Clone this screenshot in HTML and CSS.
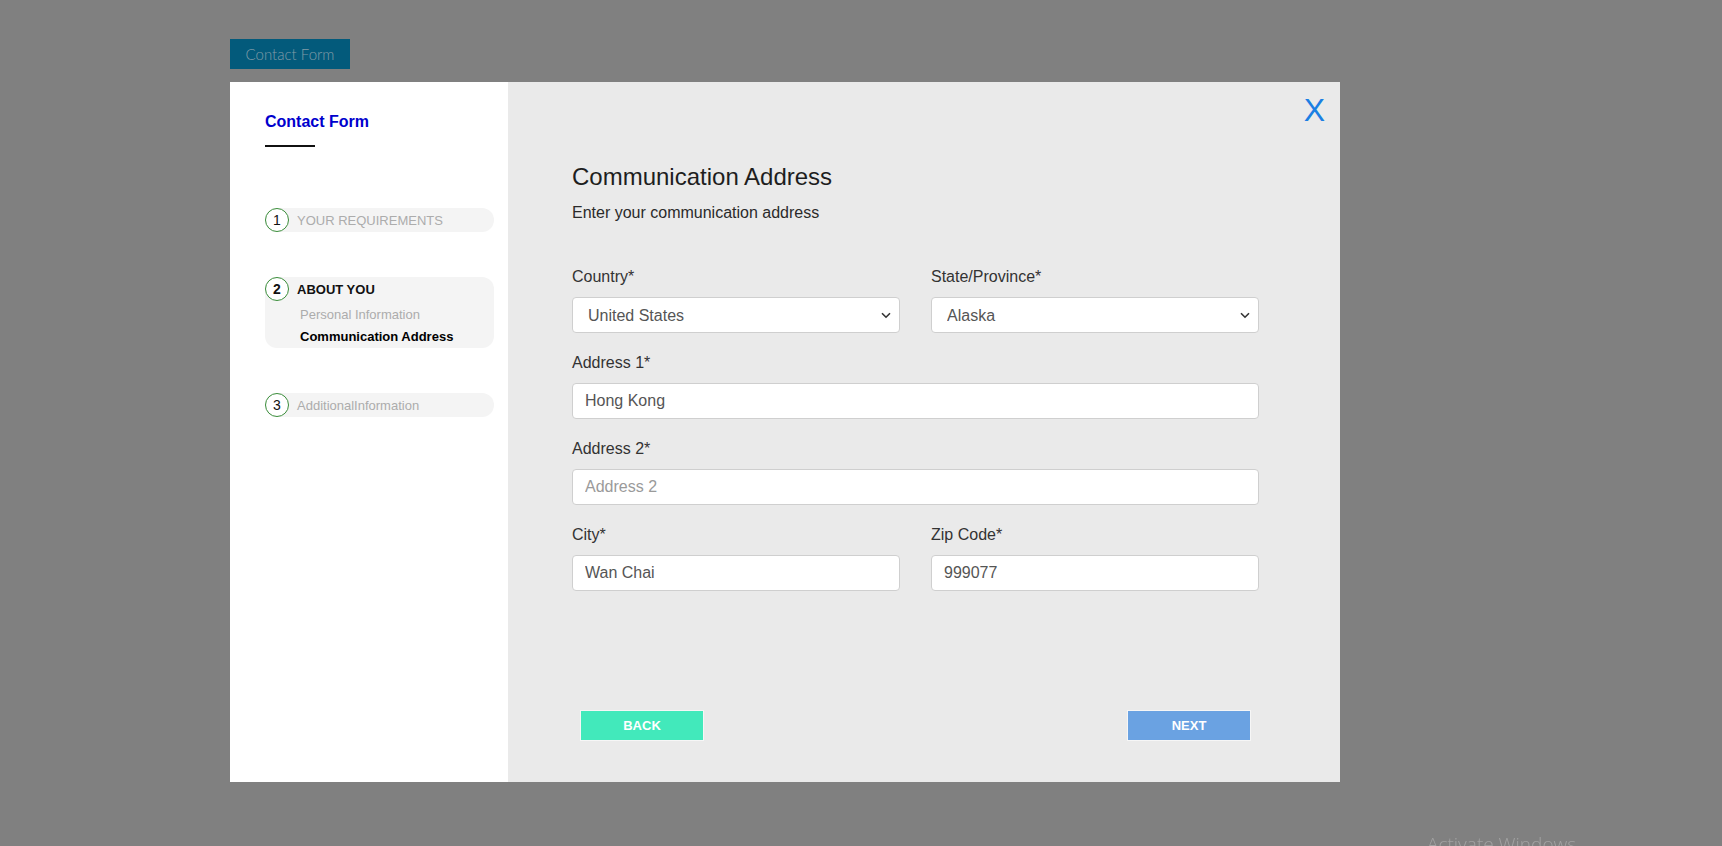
FILE: index.html
```html
<!DOCTYPE html>
<html lang="en">
<head>
<meta charset="utf-8">
<title>Contact Form</title>
<link rel="stylesheet" href="styles.css">
</head>
<body>
<div class="page">
  <button class="open-btn" type="button">Contact Form</button>
  <div class="modal">
    <aside class="sidebar">
      <h1 class="side-title">Contact Form</h1>
      <div class="side-rule"></div>
      <ul class="steps">
        <li class="step">
          <div class="step-head">
            <span class="circle">1</span>
            <span class="step-name muted">YOUR REQUIREMENTS</span>
          </div>
        </li>
        <li class="step active">
          <div class="step-head">
            <span class="circle">2</span>
            <span class="step-name">ABOUT YOU</span>
          </div>
          <ul class="substeps">
            <li class="sub muted">Personal Information</li>
            <li class="sub current">Communication Address</li>
          </ul>
        </li>
        <li class="step">
          <div class="step-head">
            <span class="circle">3</span>
            <span class="step-name muted">AdditionalInformation</span>
          </div>
        </li>
      </ul>
    </aside>
    <main class="main">
      <span class="close">X</span>
      <div class="content">
        <h2 class="title">Communication Address</h2>
        <p class="subtitle">Enter your communication address</p>
        <form class="form">
          <div class="field">
            <label class="label">Country*</label>
            <div class="select-wrap">
              <select class="control select"><option>United States</option></select>
              <svg class="chev" width="10" height="7" viewBox="0 0 10 7"><path d="M1 1.2 L5 5.2 L9 1.2" fill="none" stroke="#333" stroke-width="1.6"/></svg>
            </div>
          </div>
          <div class="field">
            <label class="label">State/Province*</label>
            <div class="select-wrap">
              <select class="control select"><option>Alaska</option></select>
              <svg class="chev" width="10" height="7" viewBox="0 0 10 7"><path d="M1 1.2 L5 5.2 L9 1.2" fill="none" stroke="#333" stroke-width="1.6"/></svg>
            </div>
          </div>
          <div class="field full">
            <label class="label">Address 1*</label>
            <input class="control" type="text" value="Hong Kong">
          </div>
          <div class="field full">
            <label class="label">Address 2*</label>
            <input class="control" type="text" placeholder="Address 2">
          </div>
          <div class="field">
            <label class="label">City*</label>
            <input class="control" type="text" value="Wan Chai">
          </div>
          <div class="field">
            <label class="label">Zip Code*</label>
            <input class="control" type="text" value="999077">
          </div>
        </form>
        <div class="actions">
          <button class="btn back" type="button">BACK</button>
          <button class="btn next" type="button">NEXT</button>
        </div>
      </div>
    </main>
  </div>
</div>
<div class="watermark">Activate Windows</div>
</body>
</html>
```
FILE: styles.css
```css
html, body {
  margin: 0;
  padding: 0;
  height: 846px;
  overflow: hidden;
}
body {
  background: #808080;
  font-family: "Liberation Sans", Arial, sans-serif;
}
.page {
  padding: 39px 0 0 230px;
}
.open-btn {
  display: block;
  width: 120px;
  height: 30px;
  margin: 0;
  padding: 0;
  border: none;
  background: #035a7b;
  color: #819ca8;
  font-family: "Lato", "Open Sans", sans-serif;
  font-weight: 300;
  font-size: 15px;
  text-align: center;
}
.modal {
  margin-top: 13px;
  width: 1110px;
  height: 700px;
  display: flex;
}
.sidebar {
  width: 229px;
  background: #fff;
  padding: 31px 14px 0 35px;
}
.side-title {
  margin: 0;
  font-size: 16px;
  line-height: 18px;
  font-weight: bold;
  color: #0000cd;
}
.side-rule {
  width: 50px;
  height: 2px;
  background: #111;
  margin-top: 14px;
}
.steps {
  list-style: none;
  margin: 61px 0 0;
  padding: 0;
  display: flex;
  flex-direction: column;
  gap: 45px;
}
.step {
  background: #f4f4f4;
  border-radius: 12px;
}
.step-head {
  display: flex;
  align-items: center;
  height: 24px;
}
.circle {
  box-sizing: border-box;
  width: 24px;
  height: 24px;
  border: 1.5px solid #3a8d3a;
  border-radius: 50%;
  display: flex;
  align-items: center;
  justify-content: center;
  font-size: 14px;
  color: #111;
  background: #fff;
}
.step.active .circle {
  font-weight: bold;
}
.step-name {
  margin-left: 8px;
  font-size: 13px;
  color: #111;
}
.step.active .step-name {
  font-weight: bold;
}
.muted {
  color: #acacac;
}
.step-name.muted {
  color: #acacac;
}
.substeps {
  list-style: none;
  margin: 3px 0 0;
  padding: 0 0 0 35px;
}
.sub {
  font-size: 13px;
  line-height: 22px;
}
.sub.current {
  font-weight: bold;
  color: #000;
}
.main {
  flex: 1;
  position: relative;
  background: #eaeaea;
  padding: 81px 0 0 64px;
}
.close {
  position: absolute;
  top: 12px;
  right: 15px;
  font-size: 32px;
  line-height: 32px;
  color: #1b7fe3;
}
.content {
  width: 687px;
}
.title {
  margin: 0;
  font-size: 24px;
  line-height: 28px;
  font-weight: normal;
  color: #1e1e1e;
}
.subtitle {
  margin: 12px 0 0;
  font-size: 16px;
  line-height: 20px;
  color: #2a2a2a;
}
.form {
  margin-top: 44px;
  display: grid;
  grid-template-columns: 1fr 1fr;
  column-gap: 31px;
}
.field {
  display: flex;
  flex-direction: column;
  margin-bottom: 20px;
}
.field.full {
  grid-column: 1 / span 2;
}
.label {
  font-size: 16px;
  line-height: 20px;
  color: #333;
  margin-bottom: 10px;
}
.control {
  box-sizing: border-box;
  width: 100%;
  height: 36px;
  margin: 0;
  padding: 0 12px;
  border: 1px solid #cfcfcf;
  border-radius: 4px;
  background: #fff;
  font-family: "Liberation Sans", Arial, sans-serif;
  font-size: 16px;
  color: #555;
  outline: none;
}
.control::placeholder {
  color: #9a9a9a;
}
.select-wrap {
  position: relative;
}
.select {
  appearance: none;
  -webkit-appearance: none;
  padding-left: 15px;
}
.chev {
  position: absolute;
  right: 9px;
  top: 15px;
  pointer-events: none;
}
.actions {
  margin-top: 99px;
  display: flex;
  justify-content: space-between;
  padding: 0 8px 0 8px;
}
.btn {
  box-sizing: border-box;
  width: 124px;
  height: 31px;
  margin: 0;
  padding: 0;
  border: 1px solid #f6f6f6;
  color: #fff;
  font-family: "Liberation Sans", Arial, sans-serif;
  font-weight: bold;
  font-size: 13px;
}
.back {
  background: #42e9bb;
}
.next {
  background: #6aa2e2;
}
.watermark {
  position: fixed;
  left: 1427px;
  top: 832px;
  font-family: "Open Sans", "Noto Sans", sans-serif;
  font-weight: 300;
  font-size: 19px;
  line-height: 24px;
  color: #a2a2a2;
  white-space: nowrap;
}
```
